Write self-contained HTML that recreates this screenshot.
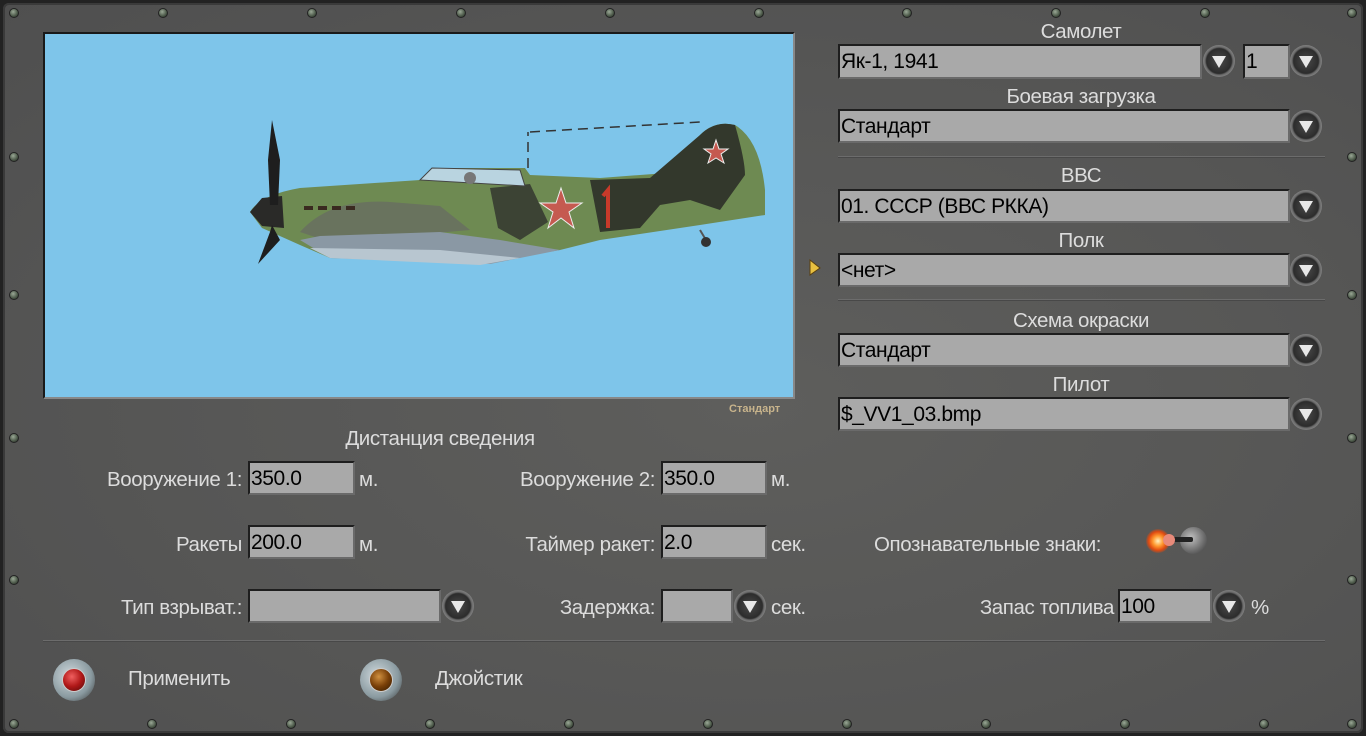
<!DOCTYPE html>
<html><head><meta charset="utf-8"><style>
*{margin:0;padding:0;box-sizing:border-box}
body{width:1366px;height:736px;overflow:hidden;background:#222;font-family:"Liberation Sans",sans-serif}
#p{position:absolute;left:3px;top:3px;width:1360px;height:730px;border-radius:6px;background:radial-gradient(ellipse at 55% 55%,#5e5e5c 0%,#575756 50%,#4f4f4f 100%);box-shadow:inset 0 0 0 2px #3a3a3a}
.a{position:absolute}
.lb{position:absolute;color:#dcdcdc;font-size:20.5px;letter-spacing:-0.4px;white-space:nowrap;line-height:22px}
.c{text-align:center;width:400px}
.r{text-align:right}
.f{position:absolute;background:#a9a9a9;border:2px solid #1e1e1e;border-right-color:#6a6a6a;border-bottom-color:#6a6a6a;color:#000;font-size:21px;line-height:31px;padding-left:1px;letter-spacing:-0.4px;white-space:nowrap}
.b{position:absolute;width:32px;height:32px;border-radius:50%;background:radial-gradient(circle,#4a4a4a 0%,#2c2c2c 55%,#6b6b6b 62%,#8a8a8a 75%,#4d4d4d 100%)}
.b:after{content:"";position:absolute;left:9px;top:11px;border-left:7px solid transparent;border-right:7px solid transparent;border-top:12px solid #e8e8e8}
.s{position:absolute;width:10px;height:10px;border-radius:50%;background:radial-gradient(circle at 40% 35%,#9aa896,#4b5848 60%,#222822);border:1px solid #222}
.ln{position:absolute;height:2px;background:#6c6c6c;border-bottom:1px solid #484848}
</style></head><body>
<div id="p"></div>
<div class="s" style="left:9px;top:8px"></div><div class="s" style="left:158px;top:8px"></div><div class="s" style="left:307px;top:8px"></div><div class="s" style="left:456px;top:8px"></div><div class="s" style="left:605px;top:8px"></div><div class="s" style="left:754px;top:8px"></div><div class="s" style="left:902px;top:8px"></div><div class="s" style="left:1051px;top:8px"></div><div class="s" style="left:1200px;top:8px"></div><div class="s" style="left:1347px;top:8px"></div>
<div class="s" style="left:9px;top:719px"></div><div class="s" style="left:147px;top:719px"></div><div class="s" style="left:286px;top:719px"></div><div class="s" style="left:425px;top:719px"></div><div class="s" style="left:564px;top:719px"></div><div class="s" style="left:703px;top:719px"></div><div class="s" style="left:842px;top:719px"></div><div class="s" style="left:981px;top:719px"></div><div class="s" style="left:1120px;top:719px"></div><div class="s" style="left:1259px;top:719px"></div><div class="s" style="left:1347px;top:719px"></div>
<div class="s" style="left:9px;top:152px"></div><div class="s" style="left:9px;top:290px"></div><div class="s" style="left:9px;top:433px"></div><div class="s" style="left:9px;top:575px"></div>
<div class="s" style="left:1347px;top:152px"></div><div class="s" style="left:1347px;top:290px"></div><div class="s" style="left:1347px;top:433px"></div><div class="s" style="left:1347px;top:575px"></div>
<div class="a" style="left:43px;top:32px;width:752px;height:367px;background:#7ec5ea;border:2px solid #1a1a1a;border-right-color:#888;border-bottom-color:#888">
<svg width="748" height="363" viewBox="0 0 748 363" style="position:absolute;left:0;top:0">
<g transform="translate(-45,-34)">
<path d="M528 168 L528 132 M530 132 L700 122" stroke="#333" stroke-width="1.5" stroke-dasharray="10 6" fill="none"/>
<path d="M250 212 Q260 195 300 188 L420 180 L432 168 L525 168 L530 175 L600 178 L680 172 L700 135 Q715 120 735 125 Q760 140 765 190 L765 215 L700 225 L600 240 L560 250 L490 262 L330 258 L300 245 L262 228 Z" fill="#6e8a52"/>
<path d="M300 232 Q330 198 390 202 L440 206 L470 230 L330 242 Z" fill="#69735e"/>
<path d="M590 180 L650 178 L700 135 Q715 120 735 125 Q745 160 745 175 L720 210 L690 200 L660 205 L640 228 L600 232 Z" fill="#33382c"/>
<path d="M490 188 L530 184 L548 222 L520 240 L498 228 Z" fill="#3c4334"/>
<path d="M300 240 L330 258 L490 264 L560 250 L500 240 L440 232 L320 236 Z" fill="#8a98a4"/>
<path d="M310 248 L330 258 L480 265 L520 258 L440 250 Z" fill="#b8c6d0"/>
<path d="M420 180 L432 168 L520 170 L525 186 Z" fill="#b9d4e0" stroke="#444"/>
<circle cx="470" cy="178" r="6" fill="#777"/>
<path d="M250 212 L262 198 L282 196 L284 228 L262 226 Z" fill="#2a2a28"/>
<path d="M272 120 L280 160 L278 205 L270 205 L268 160 Z" fill="#1e1e1e"/>
<path d="M272 225 L280 240 L258 264 L270 232 Z" fill="#1e1e1e"/>
<polygon points="561,188 566,203 582,203 569,212 574,228 561,218 548,228 553,212 540,203 556,203" fill="#c55a50" stroke="#eee" stroke-width="1"/>
<polygon points="716,140 719,149 728,149 721,154 724,163 716,158 708,163 711,154 704,149 713,149" fill="#c55a50" stroke="#eee" stroke-width="1"/>
<path d="M603 196 L608 190 L608 228" stroke="#c83a2a" stroke-width="4" fill="none"/>
<path d="M700 230 L706 240" stroke="#555" stroke-width="2"/>
<circle cx="706" cy="242" r="5" fill="#333"/>
<g fill="#3a2a20"><rect x="304" y="206" width="9" height="4"/><rect x="318" y="206" width="9" height="4"/><rect x="332" y="206" width="9" height="4"/><rect x="346" y="206" width="9" height="4"/></g>
</g></svg></div>
<div class="a" style="left:729px;top:403px;color:#c8b48c;font-size:11px;font-weight:bold">Стандарт</div>
<div class="lb c" style="left:881px;top:21px">Самолет</div>
<div class="f" style="left:838px;top:44px;width:364px;height:35px">Як-1, 1941</div>
<div class="b" style="left:1203px;top:45px"></div>
<div class="f" style="left:1243px;top:44px;width:47px;height:35px">1</div>
<div class="b" style="left:1290px;top:45px"></div>
<div class="lb c" style="left:881px;top:86px">Боевая загрузка</div>
<div class="f" style="left:838px;top:109px;width:452px;height:34px">Стандарт</div>
<div class="b" style="left:1290px;top:110px"></div>
<div class="ln" style="left:838px;top:156px;width:487px"></div>
<div class="lb c" style="left:881px;top:165px">ВВС</div>
<div class="f" style="left:838px;top:189px;width:452px;height:34px">01. СССР (ВВС РККА)</div>
<div class="b" style="left:1290px;top:190px"></div>
<div class="lb c" style="left:881px;top:230px">Полк</div>
<div class="f" style="left:838px;top:253px;width:452px;height:34px">&lt;нет&gt;</div>
<div class="b" style="left:1290px;top:254px"></div>
<svg class="a" style="left:808px;top:259px" width="14" height="18"><path d="M2 1 L12 9 L2 16 Z" fill="#e8c040" stroke="#5a4010"/></svg>
<div class="ln" style="left:838px;top:299px;width:487px"></div>
<div class="lb c" style="left:881px;top:310px">Схема окраски</div>
<div class="f" style="left:838px;top:333px;width:452px;height:34px">Стандарт</div>
<div class="b" style="left:1290px;top:334px"></div>
<div class="lb c" style="left:881px;top:374px">Пилот</div>
<div class="f" style="left:838px;top:397px;width:452px;height:34px">$_VV1_03.bmp</div>
<div class="b" style="left:1290px;top:398px"></div>
<div class="lb c" style="left:240px;top:428px">Дистанция сведения</div>
<div class="lb r" style="left:40px;top:469px;width:202px">Вооружение 1:</div>
<div class="f" style="left:248px;top:461px;width:107px;height:34px">350.0</div>
<div class="lb" style="left:359px;top:469px">м.</div>
<div class="lb r" style="left:400px;top:469px;width:255px">Вооружение 2:</div>
<div class="f" style="left:661px;top:461px;width:106px;height:34px">350.0</div>
<div class="lb" style="left:771px;top:469px">м.</div>
<div class="lb r" style="left:40px;top:534px;width:202px">Ракеты</div>
<div class="f" style="left:248px;top:525px;width:107px;height:34px">200.0</div>
<div class="lb" style="left:359px;top:534px">м.</div>
<div class="lb r" style="left:400px;top:534px;width:255px">Таймер ракет:</div>
<div class="f" style="left:661px;top:525px;width:106px;height:34px">2.0</div>
<div class="lb" style="left:771px;top:534px">сек.</div>
<div class="lb" style="left:874px;top:534px">Опознавательные знаки:</div>
<div class="a" style="left:1146px;top:529px;width:24px;height:24px;border-radius:50%;background:radial-gradient(circle,#fff0c0 0%,#ff9a30 30%,#e04a10 55%,rgba(200,60,10,0) 75%)"></div>
<div class="a" style="left:1180px;top:527px;width:27px;height:27px;border-radius:50%;background:radial-gradient(circle at 40% 40%,#c0c0c0,#6a6a6a 60%,#333)"></div>
<div class="a" style="left:1167px;top:537px;width:26px;height:5px;background:#222;border-radius:2px"></div>
<div class="a" style="left:1163px;top:534px;width:12px;height:12px;border-radius:50%;background:#e88a7a"></div>
<div class="lb r" style="left:40px;top:597px;width:202px">Тип взрыват.:</div>
<div class="f" style="left:248px;top:589px;width:193px;height:34px"></div>
<div class="b" style="left:442px;top:590px"></div>
<div class="lb r" style="left:400px;top:597px;width:255px">Задержка:</div>
<div class="f" style="left:661px;top:589px;width:72px;height:34px"></div>
<div class="b" style="left:734px;top:590px"></div>
<div class="lb" style="left:771px;top:597px">сек.</div>
<div class="lb r" style="left:900px;top:597px;width:214px">Запас топлива</div>
<div class="f" style="left:1118px;top:589px;width:94px;height:34px">100</div>
<div class="b" style="left:1213px;top:590px"></div>
<div class="lb" style="left:1251px;top:597px">%</div>
<div class="ln" style="left:43px;top:640px;width:1282px"></div>
<div class="a" style="left:53px;top:659px;width:42px;height:42px;border-radius:50%;background:radial-gradient(circle at 40% 40%,#d0dade,#8a9aa0 60%,#333 100%)"></div>
<div class="a" style="left:62px;top:668px;width:24px;height:24px;border-radius:50%;background:radial-gradient(circle at 40% 35%,#f06060,#b01818 50%,#500808);border:1px solid #ccc"></div>
<div class="lb" style="left:128px;top:668px">Применить</div>
<div class="a" style="left:360px;top:659px;width:42px;height:42px;border-radius:50%;background:radial-gradient(circle at 40% 40%,#d0dade,#8a9aa0 60%,#333 100%)"></div>
<div class="a" style="left:369px;top:668px;width:24px;height:24px;border-radius:50%;background:radial-gradient(circle at 40% 35%,#d09040,#7a4008 50%,#301800);border:1px solid #ccc"></div>
<div class="lb" style="left:435px;top:668px">Джойстик</div>
</body></html>
